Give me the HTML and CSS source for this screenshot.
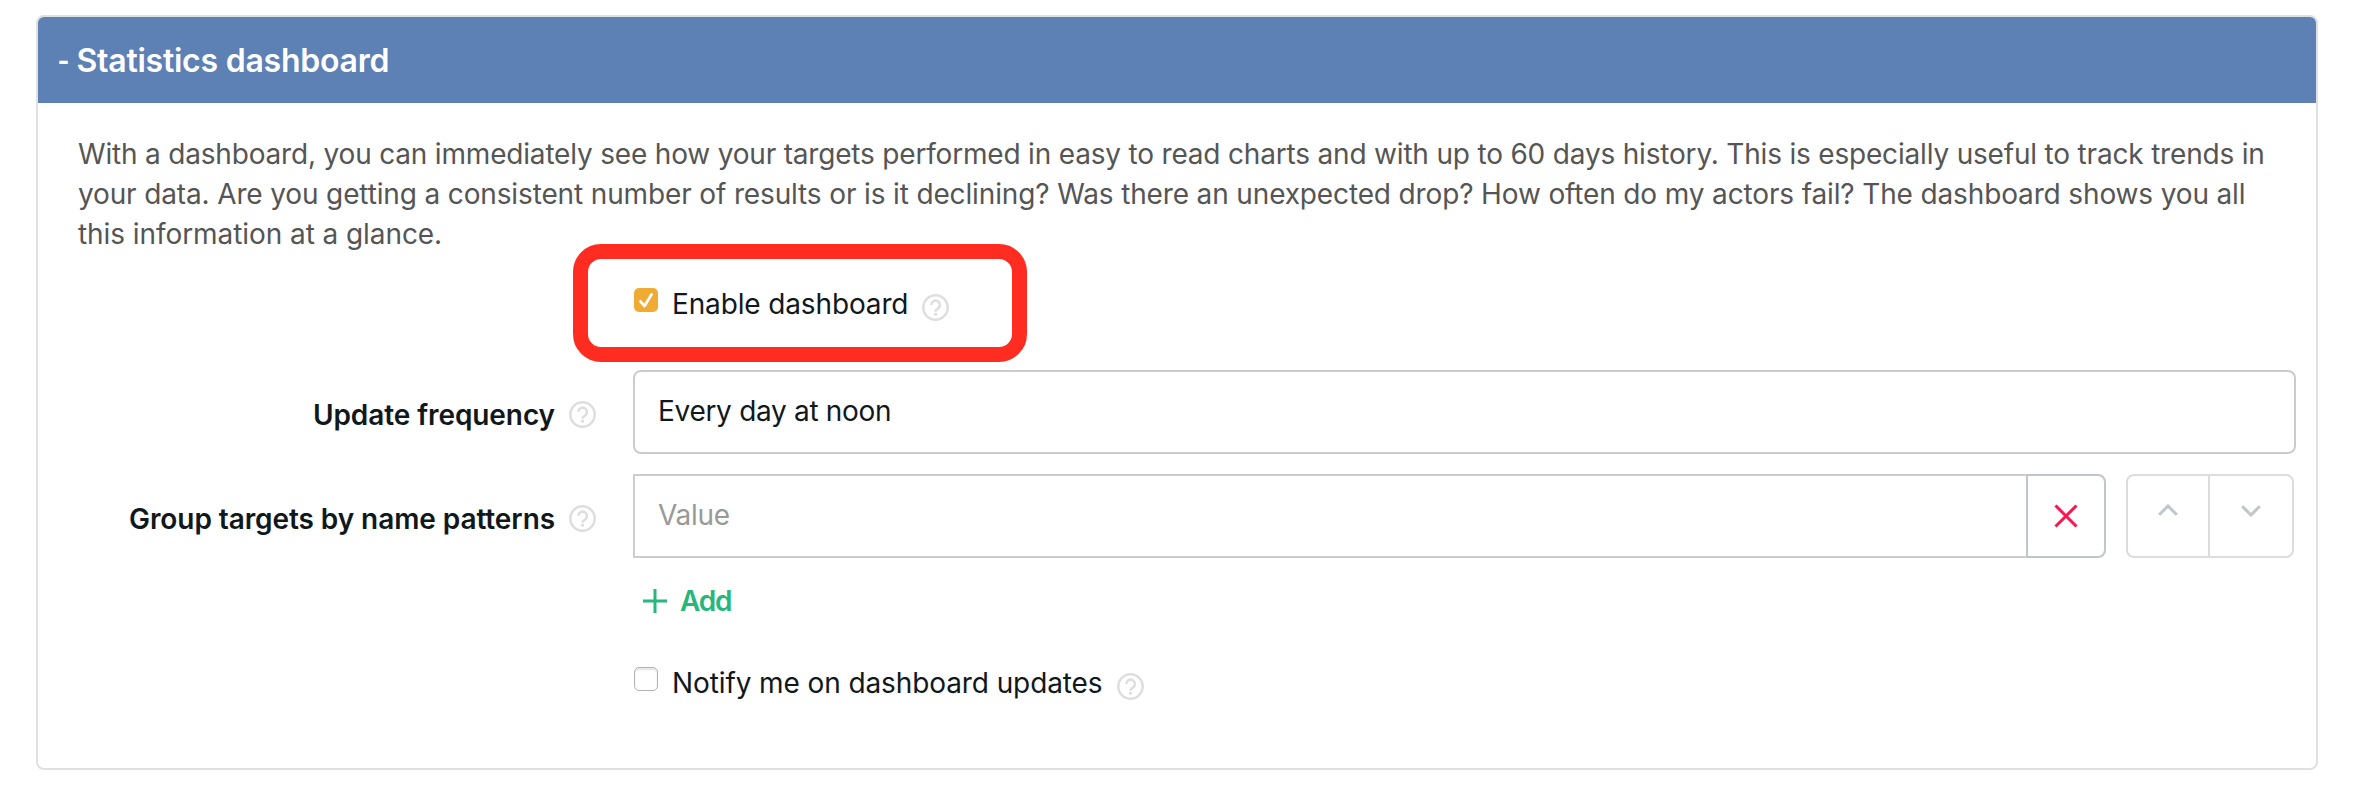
FILE: index.html
```html
<!DOCTYPE html>
<html lang="en">
<head>
<meta charset="utf-8">
<title>Statistics dashboard</title>
<link rel="stylesheet" href="styles.css">
</head>
<body>
<svg class="defs" width="0" height="0">
  <symbol id="help" viewBox="0 0 27 27">
    <circle cx="13.5" cy="13.5" r="12.2" fill="none" stroke="currentColor" stroke-width="2.500"/>
    <path d="M9.300 11a4.300 4.300 0 1 1 6.600 3.600c-1.600 1-2.400 1.600-2.400 3.200" fill="none" stroke="currentColor" stroke-width="2.500"/>
    <rect x="12" y="18.900" width="3" height="2.700" fill="currentColor"/>
  </symbol>
</svg>
<section class="panel">
  <header class="panel-header"><h2 class="title"><span class="dash">-</span> Statistics dashboard</h2></header>
  <div class="panel-body">
    <p class="intro">
      <span class="line line-1">With a dashboard, you can immediately see how your targets performed in easy to read charts and with up to 60 days history. This is especially useful to track trends in</span>
      <span class="line line-2">your data. Are you getting a consistent number of results or is it declining? Was there an unexpected drop? How often do my actors fail? The dashboard shows you all</span>
      <span class="line line-3">this information at a glance.</span>
    </p>
    <div class="check-row enable">
      <span class="checkbox checked"><svg width="24" height="24" viewBox="0 0 24 24"><path d="M6.500 13.300l4 4.700 7-11.500" fill="none" stroke="#fff" stroke-width="2.800" stroke-linecap="round" stroke-linejoin="round"/></svg></span>
      <span class="check-text">Enable dashboard</span>
      <svg class="help"><use href="#help"/></svg>
      <span class="highlight"></span>
    </div>
    <div class="field">
      <div class="label"><span>Update frequency</span><svg class="help"><use href="#help"/></svg></div>
      <div class="input select"><span>Every day at noon</span></div>
    </div>
    <div class="field">
      <div class="label"><span>Group targets by name patterns</span><svg class="help"><use href="#help"/></svg></div>
      <div class="input value"><span>Value</span></div>
      <div class="remove"><svg width="24" height="24" viewBox="0 0 24 24"><path d="M1.500 1.500l21 21M22.500 1.500l-21 21" stroke="#ff1450" stroke-width="3" fill="none"/></svg></div>
      <div class="order">
        <div class="move"><svg width="20" height="12" viewBox="0 0 20 12"><path d="M1.200 10.800L10 2l8.800 8.800" fill="none" stroke="#c1c6ca" stroke-width="3"/></svg></div>
        <div class="move down"><svg width="20" height="12" viewBox="0 0 20 12"><path d="M1.200 1.200L10 10l8.800-8.800" fill="none" stroke="#c1c6ca" stroke-width="3"/></svg></div>
      </div>
    </div>
    <div class="add"><svg width="24" height="24" viewBox="0 0 24 24"><path d="M12 0v24M0 12h24" stroke="#27b67d" stroke-width="3"/></svg><span>Add</span></div>
    <div class="check-row notify">
      <span class="checkbox"></span>
      <span class="check-text">Notify me on dashboard updates</span>
      <svg class="help"><use href="#help"/></svg>
    </div>
  </div>
</section>
</body>
</html>
```
FILE: styles.css
```css
* { box-sizing: border-box; }
body {
  margin: 0;
  padding: 15px 44px 16px 36px;
  background: #fff;
  font-family: Inter, "Liberation Sans", sans-serif;
  font-size: 28px;
  line-height: 40px;
  color: #11181c;
  white-space: nowrap;
}
.defs { position: absolute; }
svg { display: block; flex: none; }
.panel {
  height: 755px;
  border: 2px solid #e0e0e0;
  border-radius: 8px;
  overflow: hidden;
}
.panel-header {
  display: flex;
  align-items: center;
  height: 86px;
  padding: 2px 0 0 20px;
  background: #5d80b5;
}
.title {
  margin: 0;
  font-size: 32px;
  font-weight: 600;
  color: #fff;
  letter-spacing: -0.24px;
}
.dash { display: inline-block; margin: 0 -2px 0 -2px; transform: scaleX(0.8); }
.panel-body { padding: 31px 20px 0 0; }
.intro { margin: 0 0 0 40px; color: #555; }
.line { display: block; }
.line-1 { letter-spacing: -0.185px; }
.line-2 { letter-spacing: -0.14px; }
.line-3 { letter-spacing: -0.07px; }
.check-row {
  position: relative;
  display: flex;
  height: 48px;
  margin-left: 596px;
}
.enable { margin: 26px 0 0 596px; }
.checkbox {
  flex: none;
  width: 24px;
  height: 24px;
  margin-top: 8px;
  border: 1.5px solid #b4b4b4;
  border-radius: 5px;
  box-shadow: inset 0 2px 2px #e4e4e4;
}
.checked { border: 0; background: #f0ab35; box-shadow: none; }
.check-text { width: 237px; margin: 4px 0 0 14px; letter-spacing: -0.14px; }
.help { width: 27px; height: 27px; color: #dedede; }
.check-row .help { margin: 14px 0 0 13px; }
.highlight {
  position: absolute;
  left: -61px;
  top: -36px;
  width: 454px;
  height: 118px;
  border: 15px solid #ff2d21;
  border-radius: 28px;
}
.field { display: flex; height: 84px; }
.enable + .field { margin: 42px 0 20px; }
.label {
  display: flex;
  justify-content: flex-end;
  width: 558px;
  margin-right: 37px;
  padding-top: 25px;
  font-weight: 600;
  letter-spacing: -0.08px;
}
.label .help { margin: 6px 0 0 14px; }
.input {
  flex: 1;
  padding: 19px 23px;
  border: 2px solid #ccc;
  letter-spacing: -0.3px;
}
.select { border-radius: 8px; }
.value { border-right: 0; color: #999; }
.remove {
  width: 80px;
  padding: 28px 0 0 26px;
  border: 2px solid #c1c6ca;
  border-radius: 0 8px 8px 0;
}
.order {
  display: flex;
  width: 168px;
  margin: 0 2px 0 20px;
  border: 2px solid #dcdcdc;
  border-radius: 8px;
}
.move { flex: none; width: 82px; padding: 28px 0 0 30px; border-right: 2px solid #dcdcdc; }
.down { border-right: 0; padding-top: 29px; padding-left: 31px; }
.add {
  display: flex;
  gap: 13px;
  margin: 23px 0 0 605px;
  font-weight: 600;
  letter-spacing: -1.2px;
  color: #27b67d;
}
.add svg { margin-top: 8px; }
.notify { margin-top: 38px; }
.notify .check-text { width: 432px; letter-spacing: -0.1px; }
```
